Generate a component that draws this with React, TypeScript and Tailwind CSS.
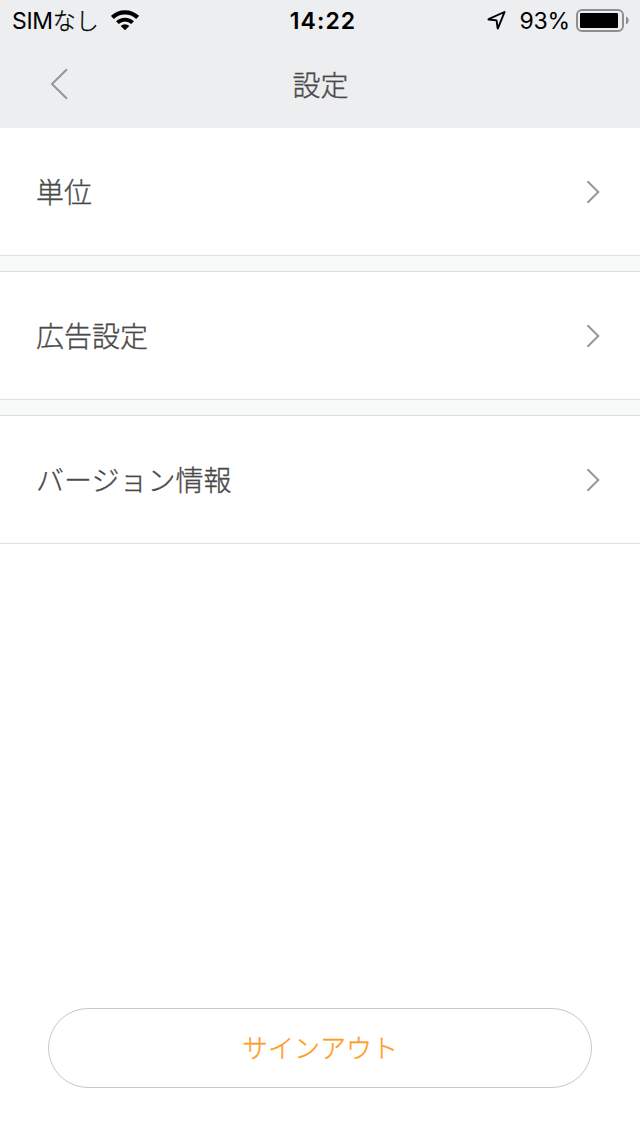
import React from 'react';

interface ChevronProps {
  direction: 'left' | 'right';
}

const Chevron: React.FC<ChevronProps> = ({ direction }) => {
  if (direction === 'left') {
    return (
      <svg width="18" height="32" viewBox="0 0 18 32" fill="none" stroke="#949597" strokeWidth="2">
        <path d="M17 1.3L2 16l15 14.7" />
      </svg>
    );
  }
  return (
    <svg width="14" height="24" viewBox="0 0 14 24" fill="none" stroke="#979797" strokeWidth="2">
      <path d="M1.5 1.2L12.3 12l-10.8 10.8" />
    </svg>
  );
};

const WifiIcon: React.FC = () => (
  <svg width="28" height="21" viewBox="0 0 28 21" fill="none" stroke="#000" strokeWidth="4.2">
    <path d="M1.4 7.4a18.2 18.2 0 0 1 25.2 0" />
    <path d="M6.4 12.7a10.9 10.9 0 0 1 15.2 0" strokeWidth="3.9" />
    <path d="M14 20.2l-4.3-4.2a6 6 0 0 1 8.6 0z" fill="#000" stroke="none" />
  </svg>
);

const LocationIcon: React.FC = () => (
  <svg width="20" height="20" viewBox="0 0 20 20" fill="none" stroke="#000" strokeWidth="1.9" strokeLinejoin="round">
    <path d="M17.5 2.2Q17.8 1.9 17.4 2L1.6 9.2Q1.2 9.5 1.7 9.6L8.9 10.3Q9.6 10.4 9.7 11L10.6 18.2Q10.8 18.7 11 18.2z" />
  </svg>
);

const BatteryIcon: React.FC = () => (
  <svg width="54" height="23" viewBox="0 0 54 23">
    <rect x="1" y="1" width="46" height="21" rx="5" fill="none" stroke="#8e8f90" strokeWidth="2" />
    <rect x="4" y="4" width="38" height="15" rx="1" fill="#000" />
    <path d="M50 7.5c3.6 1.5 3.6 6.5 0 8z" fill="#8e8f90" />
  </svg>
);

const StatusBar: React.FC = () => (
  <div className="grid h-10 grid-cols-3 items-center pl-3 pr-[10px] text-black">
    <div className="flex items-center gap-3">
      <span className="w-[87px] pt-0.5 text-[23px] leading-[38px] whitespace-nowrap">
        <span className="tracking-[-0.3px]">SIM</span>
        <span className="font-light [-webkit-text-stroke:0.3px]">なし</span>
      </span>
      <WifiIcon />
    </div>
    <span className="pt-0.5 pl-1 text-center text-[23px] font-semibold leading-[38px] tracking-[1.1px]">14:22</span>
    <div className="flex items-center justify-end">
      <LocationIcon />
      <span className="ml-[13px] mr-[6px] pt-0.5 text-[23px] leading-[38px] tracking-[-0.2px]">93%</span>
      <BatteryIcon />
    </div>
  </div>
);

interface MenuRowProps {
  label: string;
}

const MenuRow: React.FC<MenuRowProps> = ({ label }) => (
  <button className="flex h-32 w-full items-center justify-between border-b border-[#dfe1e0] bg-white pl-9 pr-10">
    <span className="pt-0.5 text-[28px] leading-10">{label}</span>
    <Chevron direction="right" />
  </button>
);

const Gap: React.FC = () => <div className="h-4 border-b border-[#dbdfdd] bg-[#f8faf9]"></div>;

const App: React.FC = () => {
  return (
    <div className="flex h-[1136px] w-[640px] flex-col overflow-hidden bg-white font-['Inter','Noto_Sans_CJK_JP',sans-serif] text-[#4a4a4a]">
      <header className="h-32 bg-[#edeef0]">
        <StatusBar />
        {/* Navigation bar */}
        <div className="grid h-22 grid-cols-3 items-center pl-[50px] pr-[50px]">
          <button>
            <Chevron direction="left" />
          </button>
          <h1 className="pt-[3px] pl-px text-center text-[28px] font-light leading-10 [-webkit-text-stroke:0.35px]">設定</h1>
        </div>
      </header>

      <main className="font-light [-webkit-text-stroke:0.35px]">
        <MenuRow label="単位" />
        <Gap />
        <MenuRow label="広告設定" />
        <Gap />
        <MenuRow label="バージョン情報" />
      </main>

      <footer className="mt-auto px-12 pb-12">
        <button className="flex h-20 w-full items-center justify-center rounded-full border border-[#c8c8c8] pt-0.5 text-[26px] font-light leading-10 text-[#ff9c27] [-webkit-text-stroke:0.35px]">
          サインアウト
        </button>
      </footer>
    </div>
  );
};

export default App;
